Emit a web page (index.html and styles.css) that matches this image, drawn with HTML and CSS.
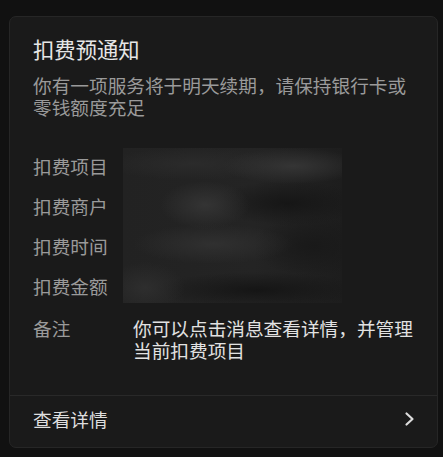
FILE: index.html
```
<!DOCTYPE html>
<html lang="zh-CN">
<head>
<meta charset="utf-8">
<link rel="stylesheet" href="styles.css">
</head>
<body>
<div class="card">
  <div class="main">
    <div class="title">扣费预通知</div>
    <div class="subtitle">你有一项服务将于明天续期，请保持银行卡或零钱额度充足</div>
    <div class="details">
      <div class="label">扣费项目</div>
      <div class="blur"></div>
      <div class="label">扣费商户</div>
      <div class="label">扣费时间</div>
      <div class="label">扣费金额</div>
      <div class="label note-label">备注</div>
      <div class="value note-value">你可以点击消息查看详情，并管理当前扣费项目</div>
    </div>
  </div>
  <div class="footer">
    <span class="footer-text">查看详情</span>
    <svg class="chevron" width="12" height="16" viewBox="0 0 12 16"><polyline points="2.5,2.5 8.5,8 2.5,13.5" fill="none" stroke="#dcdcdc" stroke-width="2.2" stroke-linecap="round" stroke-linejoin="round"/></svg>
  </div>
</div>
</body>
</html>
```
FILE: styles.css
```
html, body {
  margin: 0;
  padding: 0;
  background: #111111;
}
body {
  font-family: "Noto Sans CJK SC", "Noto Sans", sans-serif;
  width: 443px;
  height: 457px;
  overflow: hidden;
}
.card {
  box-sizing: border-box;
  margin: 16px 0 0 9px;
  width: 429px;
  height: 432px;
  background: #1a1a1a;
  border: 1px solid #262626;
  border-radius: 7px;
  display: flex;
  flex-direction: column;
}
.main {
  flex: 1;
  padding: 17.5px 18px 0 23px;
}
.title {
  font-size: 21.33px;
  line-height: 28px;
  color: #e6e6e6;
}
.subtitle {
  margin-top: 11px;
  margin-right: 8px;
  font-size: 18.67px;
  line-height: 22px;
  color: #9a9a9a;
}
.details {
  margin-top: 37px;
  display: grid;
  grid-template-columns: 90px 1fr;
  grid-template-rows: 22px 22px 22px 22px auto;
  row-gap: 18px;
  font-size: 18.67px;
  line-height: 22px;
}
.label {
  grid-column: 1;
  color: #9a9a9a;
  white-space: nowrap;
}
.note-label {
  margin-top: 2px;
}
.blur {
  grid-column: 2;
  grid-row: 1 / 5;
  margin: -6.5px 0 -6.5px 0;
  width: 219px;
  justify-self: start;
  background:
    radial-gradient(ellipse 70px 18px at 170px 18px, #353535, rgba(36,36,36,0)),
    radial-gradient(ellipse 90px 16px at 70px 16px, #2b2b2b, rgba(36,36,36,0)),
    radial-gradient(ellipse 45px 24px at 82px 57px, #343434, rgba(36,36,36,0)),
    radial-gradient(ellipse 75px 22px at 165px 55px, #161616, rgba(22,22,22,0)),
    radial-gradient(ellipse 80px 20px at 90px 96px, #303030, rgba(36,36,36,0)),
    radial-gradient(ellipse 60px 30px at 190px 98px, #191919, rgba(25,25,25,0)),
    radial-gradient(ellipse 40px 26px at 22px 140px, #2e2e2e, rgba(36,36,36,0)),
    radial-gradient(ellipse 105px 18px at 135px 142px, #151515, rgba(21,21,21,0)),
    linear-gradient(90deg, #222222, #242424 60%, #1d1d1d);
}
.note-value {
  grid-column: 2;
  margin-top: 2px;
  padding-left: 10px;
  color: #e2e2e2;
}
.footer {
  height: 52px;
  border-top: 1px solid #292929;
  box-sizing: border-box;
  display: flex;
  align-items: center;
  justify-content: space-between;
  padding: 0 21px 5px 23px;
}
.footer-text {
  font-size: 18.67px;
  line-height: 22px;
  color: #dedede;
}
.chevron {
  display: block;
}
```
